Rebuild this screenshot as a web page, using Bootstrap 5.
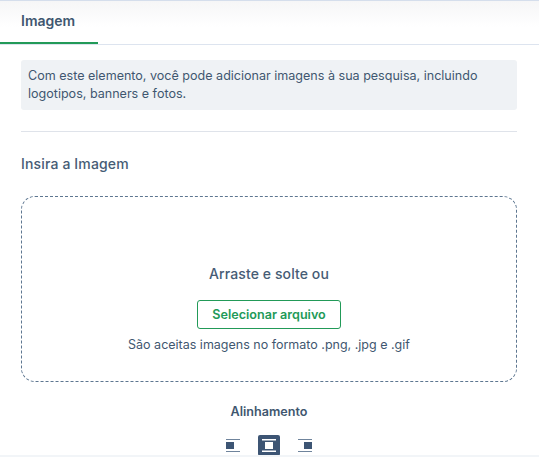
<!DOCTYPE html>
<html lang="pt-BR">
<head>
  <meta charset="UTF-8">
  <meta name="viewport" content="width=device-width, initial-scale=1.0">
  <title>Imagem</title>
  <link href="https://cdn.jsdelivr.net/npm/bootstrap@5.3.0/dist/css/bootstrap.min.css" rel="stylesheet">
  <style>
    html, body {
      height: 457px;
      overflow: hidden;
    }
    body {
      font-family: Inter, "Liberation Sans", sans-serif;
      color: #3f5770;
      background-color: #fff;
    }
    .tab-strip {
      height: 45px;
      border-top: 1px solid #d5deec;
      border-bottom: 1px solid #dde4ef;
      background: linear-gradient(#f6f6f7, #fff 26px);
    }
    .tab-active {
      width: 98px;
      height: 43px;
      padding: 6px 0 0 21px;
      border-bottom: 2px solid #229a58;
      font-size: 14px;
      font-weight: 600;
      line-height: 28px;
      color: #3f5770;
      text-decoration: none;
    }
    .panel-body {
      padding: 15px 22px 0 21px;
    }
    .hint-box {
      height: 50px;
      padding: 7px;
      background-color: #eff2f5;
      border-radius: 3px;
      font-size: 12.55px;
      line-height: 18px;
    }
    .split-line {
      margin: 21px 0 0;
      border-top: 1px solid #dfe3ea;
      opacity: 1;
    }
    .section-title {
      margin: 23px 0 0;
      font-size: 14px;
      font-weight: 500;
      line-height: 17px;
      letter-spacing: .15px;
      color: #465c75;
    }
    .drop-zone {
      height: 186px;
      margin-top: 24px;
      padding-top: 68px;
      border: 1px dashed #5d7690;
      border-radius: 14px;
    }
    .drop-title {
      font-size: 14px;
      font-weight: 500;
      line-height: 17px;
      letter-spacing: .1px;
      color: #465c75;
    }
    .file-btn {
      width: 144px;
      height: 29px;
      margin-top: 18px;
      padding: 0;
      border: 1px solid #229a58;
      border-radius: 3px;
      font-size: 12.6px;
      font-weight: 600;
      line-height: 27px;
      color: #229a58;
      background-color: #fff;
    }
    .file-note {
      margin-top: 7px;
      font-size: 12.5px;
      line-height: 18px;
    }
    .align-label {
      margin-top: 22px;
      font-size: 12.6px;
      font-weight: 600;
      line-height: 16px;
    }
    .align-row {
      gap: 14px;
      margin-top: 15px;
    }
    .align-btn {
      width: 22px;
      height: 21px;
      border: 0;
      padding: 0;
      border-radius: 2px;
      color: #3d5574;
      background-color: transparent;
    }
    .align-btn svg {
      display: block;
      margin: 0 auto;
    }
    .align-on {
      color: #fff;
      background-color: #3d5574;
    }
    .bottom-strip {
      position: absolute;
      left: 0;
      right: 0;
      top: 455px;
      height: 2px;
      background-color: #f2f5f8;
    }
  </style>
</head>
<body>

<div class="tab-strip d-flex">
  <a class="tab-active d-block" href="#">Imagem</a>
</div>

<div class="panel-body">
  <div class="hint-box">Com este elemento, você pode adicionar imagens à sua pesquisa, incluindo logotipos, banners e fotos.</div>
  <hr class="split-line">
  <h2 class="section-title">Insira a Imagem</h2>

  <div class="drop-zone d-flex flex-column align-items-center">
    <div class="drop-title">Arraste e solte ou</div>
    <button type="button" class="btn file-btn">Selecionar arquivo</button>
    <div class="file-note">São aceitas imagens no formato .png, .jpg e .gif</div>
  </div>

  <div class="align-label text-center">Alinhamento</div>
  <div class="align-row d-flex justify-content-center">
    <button type="button" class="align-btn" aria-label="Esquerda">
      <svg width="14" height="13" viewBox="0 0 14 13"><path fill="#6f849c" d="M0 0h14v1H0zM0 12h14v1H0z"/><path fill="currentColor" d="M0 3h8v7H0z"/></svg>
    </button>
    <button type="button" class="align-btn align-on" aria-label="Centro">
      <svg width="14" height="13" viewBox="0 0 14 13"><path fill="currentColor" d="M0 0h14v1.500H0zM0 11.500h14V13H0zM3 3h8v7H3z"/></svg>
    </button>
    <button type="button" class="align-btn" aria-label="Direita">
      <svg width="14" height="13" viewBox="0 0 14 13"><path fill="#6f849c" d="M0 0h14v1H0zM0 12h14v1H0z"/><path fill="currentColor" d="M6 3h8v7H6z"/></svg>
    </button>
  </div>
</div>

<div class="bottom-strip"></div>

<script src="https://cdn.jsdelivr.net/npm/bootstrap@5.3.0/dist/js/bootstrap.bundle.min.js"></script>
</body>
</html>
